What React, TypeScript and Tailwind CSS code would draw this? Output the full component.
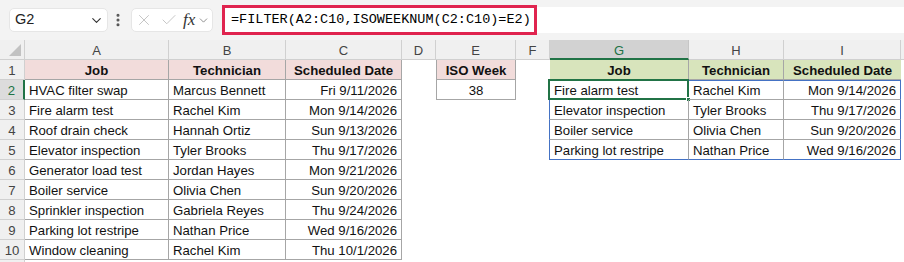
import React from 'react'
import { ChevronDown, EllipsisVertical, X, Check } from 'lucide-react'

const cols = ['A', 'B', 'C', 'D', 'E', 'F', 'G', 'H', 'I', '']

const jobs = [
  ['HVAC filter swap', 'Marcus Bennett', 'Fri 9/11/2026'],
  ['Fire alarm test', 'Rachel Kim', 'Mon 9/14/2026'],
  ['Roof drain check', 'Hannah Ortiz', 'Sun 9/13/2026'],
  ['Elevator inspection', 'Tyler Brooks', 'Thu 9/17/2026'],
  ['Generator load test', 'Jordan Hayes', 'Mon 9/21/2026'],
  ['Boiler service', 'Olivia Chen', 'Sun 9/20/2026'],
  ['Sprinkler inspection', 'Gabriela Reyes', 'Thu 9/24/2026'],
  ['Parking lot restripe', 'Nathan Price', 'Wed 9/16/2026'],
  ['Window cleaning', 'Rachel Kim', 'Thu 10/1/2026']
]

const result = [
  ['Fire alarm test', 'Rachel Kim', 'Mon 9/14/2026'],
  ['Elevator inspection', 'Tyler Brooks', 'Thu 9/17/2026'],
  ['Boiler service', 'Olivia Chen', 'Sun 9/20/2026'],
  ['Parking lot restripe', 'Nathan Price', 'Wed 9/16/2026']
]

const Cell = ({
  children,
  className = ''
}: {
  children?: React.ReactNode
  className?: string
}) => (
  <div
    className={`relative h-5 pt-[2px] leading-[18px] px-[4px] whitespace-nowrap ${className}`}
  >
    {children}
  </div>
)

const Toolbar = () => (
  <div className="h-10 bg-[#f3f3f3] flex items-center relative">
    <div className="ml-[9px] w-[99px] h-6 bg-white rounded-[5px] border border-[#e6e6e6] flex items-center justify-between pl-[5px] pr-[3px]">
      <span className="text-[14.5px] text-[#222]">G2</span>
      <ChevronDown size={15} strokeWidth={1.8} className="text-[#333]" />
    </div>
    <EllipsisVertical size={16} strokeWidth={2.6} className="ml-[2px] text-[#555]" />
    <div className="ml-[5px] w-[82px] h-6 bg-white rounded-[5px] border border-[#e6e6e6] flex items-center pl-[3px]">
      <X size={18} strokeWidth={1.3} className="text-[#c4c4c4]" />
      <Check size={18} strokeWidth={1.3} className="ml-[7px] text-[#c4c4c4]" />
      <span
        className="ml-[5px] text-[17px] italic text-[#333]"
        style={{ fontFamily: '"Liberation Serif", serif' }}
      >
        fx
      </span>
      <ChevronDown size={13} strokeWidth={1.5} className="ml-[2px] text-[#777]" />
    </div>
    <div className="ml-[9px] flex-1 h-[26px] bg-white flex items-center">
      <div
        className="h-[30px] w-[315px] border-[3px] border-[#e0244f] flex items-center pl-[6px] text-[13.5px] text-black"
        style={{ fontFamily: '"Liberation Mono", monospace' }}
      >
        =FILTER(A2:C10,ISOWEEKNUM(C2:C10)=E2)
      </div>
    </div>
  </div>
)

export default function App() {
  const rows = Array.from({ length: 11 }, (_, i) => i + 1)

  const cellFor = (r: number, c: number) => {
    const b = 'border-r border-b border-[#a6a6a6]'
    // source table A1:C10
    if (c <= 2 && r <= 10) {
      if (r === 1)
        return (
          <Cell className={`${b} bg-[#f2dcdb] font-bold text-center`}>
            {['Job', 'Technician', 'Scheduled Date'][c]}
          </Cell>
        )
      const v = jobs[r - 2][c]
      return <Cell className={`${b} ${c === 2 ? 'text-right' : ''}`}>{v}</Cell>
    }
    if (c === 4 && r <= 2) {
      return (
        <Cell
          className={`${b} border-l text-center ${r === 1 ? 'bg-[#f2dcdb] font-bold' : ''}`}
        >
          {r === 1 ? 'ISO Week' : '38'}
        </Cell>
      )
    }
    if (c >= 6 && c <= 8 && r === 1) {
      return (
        <Cell
          className={`border-b border-[#a6a6a6] ${c < 8 ? 'border-r' : ''} bg-[#d8e4bc] font-bold text-center`}
        >
          {['Job', 'Technician', 'Scheduled Date'][c - 6]}
        </Cell>
      )
    }
    // spill range G2:I5
    if (c >= 6 && c <= 8 && r >= 2 && r <= 5) {
      const v = result[r - 2][c - 6]
      const edges = [
        c === 6 ? 'border-l-[#4472c4]' : '',
        c === 8 ? 'border-r-[#4472c4]' : '',
        r === 2 ? 'border-t border-t-[#4472c4]' : '',
        r === 5 ? 'border-b-[#4472c4]' : ''
      ].join(' ')
      return (
        <Cell
          className={`border-r border-b border-[#a6a6a6] ${c === 6 ? 'border-l -ml-px' : ''} ${edges} ${c === 8 ? 'text-right' : ''} ${r === 2 ? 'pt-px' : ''}`}
        >
          {v}
          {r === 2 && c === 6 && (
            <div className="absolute -left-[2px] -top-[2px] -right-[1px] -bottom-[1px] border-2 border-[#217346] pointer-events-none">
              <div className="absolute -right-[4px] -bottom-[4px] w-[5px] h-[5px] bg-[#217346] border border-white" />
            </div>
          )}
        </Cell>
      )
    }
    return <Cell />
  }

  return (
    <div
      className="w-[904px] h-[262px] overflow-hidden bg-white text-[13.2px] text-[#111]"
      style={{ fontFamily: '"Liberation Sans", Arial, sans-serif' }}
    >
      <Toolbar />
      <div className="grid grid-cols-[25px_144px_117px_116px_34px_80px_34px_139px_95px_117px_1fr]">
        <div className="relative h-5 bg-[#f0f0f0] border-r border-b border-[#d0d0d0]">
          <div className="absolute right-[3px] bottom-[3px] w-0 h-0 border-l-[12px] border-l-transparent border-b-[12px] border-b-[#c2c2c2]" />
        </div>
        {cols.map((l, i) => (
          <div
            key={i}
            className={`h-5 pt-px leading-[19px] text-center text-[13px] border-r border-b ${
              l === 'G'
                ? 'bg-[#d2d2d2] text-[#217346] border-b-2 border-b-[#217346] border-r-[#c6c6c6]'
                : 'bg-[#f0f0f0] text-[#444] border-[#d0d0d0]'
            }`}
          >
            {l}
          </div>
        ))}
        {rows.map((r) => (
          <React.Fragment key={r}>
            <div
              className={`h-5 pt-[2px] leading-[18px] overflow-hidden text-center text-[13.2px] border-b ${
                r === 2
                  ? 'bg-[#dcdcdc] text-[#217346] border-r-2 border-r-[#217346] border-b-[#d0d0d0]'
                  : 'bg-[#f0f0f0] text-[#444] border-r border-[#d0d0d0]'
              }`}
            >
              {r <= 10 ? r : ''}
            </div>
            {cols.map((_, c) => (
              <React.Fragment key={c}>{cellFor(r, c)}</React.Fragment>
            ))}
          </React.Fragment>
        ))}
      </div>
    </div>
  )
}
